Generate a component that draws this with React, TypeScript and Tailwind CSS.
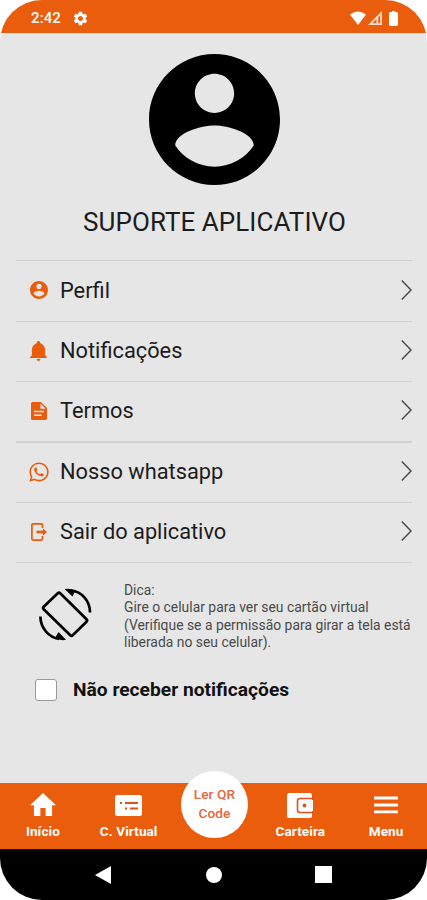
import React from "react";
import { FaWhatsapp } from "react-icons/fa";
import { MdSettings } from "react-icons/md";

const ACCOUNT =
  "M12 2C6.48 2 2 6.48 2 12s4.48 10 10 10 10-4.48 10-10S17.52 2 12 2zm0 3c1.66 0 3 1.34 3 3s-1.34 3-3 3-3-1.34-3-3 1.34-3 3-3zm0 14.2c-2.5 0-4.71-1.28-6-3.22.03-1.99 4-3.08 6-3.08 1.99 0 5.97 1.09 6 3.08-1.29 1.94-3.5 3.22-6 3.22z";

const menu = [
  {
    label: "Perfil",
    row: "h-[61px] border-t",
    icon: (
      <svg viewBox="2 2 20 20" className="size-[18px]" fill="currentColor">
        <path d={ACCOUNT} />
      </svg>
    ),
  },
  {
    label: "Notificações",
    row: "h-[60px] border-t",
    icon: (
      <svg viewBox="3 2 18 21" className="h-[20px] w-[17px]" fill="currentColor">
        <path d="M21 19v1H3v-1l2-2v-6c0-3.1 2.03-5.83 5-6.71V4a2 2 0 0 1 4 0v.29c2.97.88 5 3.61 5 6.71v6l2 2zm-7 2a2 2 0 0 1-4 0z" />
      </svg>
    ),
  },
  {
    label: "Termos",
    row: "h-[60px] border-t",
    icon: (
      <svg viewBox="0 0 16 18" className="h-[18px] w-4" fill="currentColor">
        <path
          fillRule="evenodd"
          d="M1.5 0H10l6 6v10.5q0 1.500-1.500 1.500h-13Q0 18 0 16.500v-15Q0 0 1.500 0zM9.500 1.500V6.700h5.100zM3 8.800v1.500h10V8.800zM3 12.500v1.500h7.500v-1.500z"
        />
      </svg>
    ),
  },
  {
    label: "Nosso whatsapp",
    row: "h-[61px] border-t-2",
    icon: <FaWhatsapp className="size-[22px] shrink-0" />,
  },
  {
    label: "Sair do aplicativo",
    row: "h-[61px] border-y",
    icon: (
      <svg viewBox="0 0 16 18" className="h-[18px] w-4" fill="none" stroke="currentColor" strokeWidth="1.700">
        <path d="M11.500 5V2.200Q11.500.9 10.200.9H2.200Q.9.9.9 2.200v13.600q0 1.300 1.300 1.300h8q1.300 0 1.300-1.300V13" />
        <path d="M5.500 9h7" strokeWidth="2.600" />
        <path d="M11.800 5.300 16 9l-4.200 3.700z" fill="currentColor" stroke="none" />
      </svg>
    ),
  },
];

const StatusBar = () => (
  <header className="flex h-[33px] items-center bg-[#e95d0c] pl-[31px] pr-[29px] pt-[3px] text-white">
    <span className="text-[15px] font-medium tracking-[0.1px]">2:42</span>
    <MdSettings className="ml-[11px] size-[17px]" />
    <div className="ml-auto flex items-center gap-[2px]">
      <svg viewBox="0 0 16 14" className="h-[14px] w-4" fill="currentColor">
        <path d="M0 3.500Q8-2.500 16 3.500L8 14z" />
      </svg>
      <svg viewBox="0 0 15 15" className="mr-[5px] size-[14px]" fill="none" stroke="#ffd9c4" strokeWidth="2">
        <path d="M2.400 14H14V2.400zM10 14V7" />
      </svg>
      <svg viewBox="0 0 9 15" className="h-[15px] w-[9px]" fill="currentColor">
        <path d="M3 0h3v1h1.500Q9 1 9 2.500v11Q9 15 7.500 15h-6Q0 15 0 13.500v-11Q0 1 1.500 1H3z" />
      </svg>
    </div>
  </header>
);

const RotateIcon = () => (
  <svg viewBox="0 0 62 64" className="h-16 w-[62px] text-black" fill="none" stroke="currentColor" strokeWidth="2.700">
    <path d="M23.800 11.200Q25 10 26.200 11.200L52.500 37.300Q53.700 38.500 52.500 39.700L38.700 53.300Q37.500 54.500 36.300 53.300L9.700 27.200Q8.500 26 9.700 24.800z" />
    <path d="M56 30.500C56 19 48 9.500 37 8.500M6.400 34.500C6.400 46 15 55.500 25 57" />
    <path d="M30.500 7Q36 5.800 41.500 8.500L38.500 14.500zM32 57.800Q26.500 59 21 56L24.500 50z" fill="currentColor" stroke="none" />
  </svg>
);

const App = () => {
  return (
    <div className="h-[900px] w-[427px] bg-white font-['Roboto',sans-serif] text-[#1c1c1c]">
      <div className="flex h-full flex-col overflow-hidden rounded-[42px] bg-[#e6e6e6]">
        <StatusBar />

        <section className="flex h-[227px] flex-col items-center border-t border-[#f8d9ca] pl-[2px] pt-[20px]">
          <svg viewBox="2 2 20 20" className="size-[131px] text-black" fill="currentColor">
            <path d={ACCOUNT} />
          </svg>
          <h1 className="mt-[17px] whitespace-nowrap text-[26px] leading-10 tracking-[0.05px]">SUPORTE APLICATIVO</h1>
        </section>

        {/* Menu */}
        <nav className="pl-4 pr-[15px]">
          {menu.map((item) => (
            <a key={item.label} className={`flex items-center border-[#d2d2d2] pb-[2px] pl-3 ${item.row}`}>
              <span className="flex w-[21px] justify-center text-[#e95d0c]">{item.icon}</span>
              <span className="ml-[11px] pt-[2px] text-[21.800px]">{item.label}</span>
              <svg viewBox="0 0 11 20" className="mb-px ml-auto h-5 w-[11px]" fill="none" stroke="#4a4a4a" strokeWidth="1.500">
                <path d="M.8.600 10 10 .8 19.400" />
              </svg>
            </a>
          ))}
        </nav>

        <section className="flex pl-[34px] pt-[19px]">
          <RotateIcon />
          <p className="ml-[28px] whitespace-nowrap text-[13.900px] leading-[17.300px] text-[#4a4a4a]">
            Dica:
            <br />
            Gire o celular para ver seu cartão virtual
            <br />
            (Verifique se a permissão para girar a tela está
            <br />
            liberada no seu celular).
          </p>
        </section>

        <label className="mt-[24px] flex items-center pl-[35px]">
          <span className="size-[22px] rounded-[3px] border border-[#999] bg-white" />
          <span className="ml-4 pt-px text-[19.200px] font-bold text-[#111]">Não receber notificações</span>
        </label>

        {/* Bottom tabs */}
        <footer className="mt-auto">
          <div className="grid h-[66px] grid-cols-[repeat(5,85.800px)] bg-[#e95d0c] text-[13.500px] font-bold tracking-[0.1px] text-white">
            <div className="flex flex-col items-center pt-[10px]">
              <svg viewBox="2 3 20 17" className="h-[23px] w-[26px]" preserveAspectRatio="none" fill="currentColor">
                <path d="M10 20v-6h4v6h5v-8h3L12 3 2 12h3v8z" />
              </svg>
              <span className="mt-[5px]">Início</span>
            </div>
            <div className="flex flex-col items-center pt-3">
              <svg viewBox="0 0 27 21" className="h-[21px] w-[27px]">
                <rect width="27" height="21" rx="2.500" fill="currentColor" />
                <path d="M5 8h2M10 8h13M10 13.500h2M15 13.500h8" stroke="#e2501c" strokeWidth="2.200" />
              </svg>
              <span className="mt-[5px] whitespace-nowrap">C. Virtual</span>
            </div>
            <div className="flex justify-center">
              <div className="-mt-3 flex size-[67px] shrink-0 flex-col items-center justify-center rounded-full bg-white pb-px text-[13.700px] font-medium leading-[19px] text-[#e5673a]">
                <span>Ler QR</span>
                <span>Code</span>
              </div>
            </div>
            <div className="flex flex-col items-center pt-[10px]">
              <svg viewBox="0 0 26 25" className="h-[25px] w-[26px]">
                <rect width="25" height="25" rx="2.500" fill="currentColor" />
                <path d="M26 5.500H13q-2.500 0-2.500 2.500v9q0 2.500 2.500 2.500h13" fill="none" stroke="#e2501c" strokeWidth="1.600" />
                <path d="M13 7h13v11H13z" fill="currentColor" />
                <circle cx="17.500" cy="12.500" r="1.900" fill="#e2501c" />
              </svg>
              <span className="mt-[3px]">Carteira</span>
            </div>
            <div className="flex flex-col items-center pt-[13px]">
              <svg viewBox="0 0 24 18" className="h-[18px] w-6" stroke="currentColor" strokeWidth="2.800">
                <path d="M0 2h24M0 9h24M0 15.800h24" />
              </svg>
              <span className="mt-[7px]">Menu</span>
            </div>
          </div>
          <div className="flex h-[51px] items-center justify-between bg-black px-[95px] text-white">
            <svg viewBox="0 0 16 18" className="h-[18px] w-4" fill="currentColor">
              <path d="M16 0v18L0 9z" />
            </svg>
            <span className="ml-[2px] size-4 rounded-full bg-white" />
            <span className="size-[17px] bg-white" />
          </div>
        </footer>
      </div>
    </div>
  );
};

export default App;
